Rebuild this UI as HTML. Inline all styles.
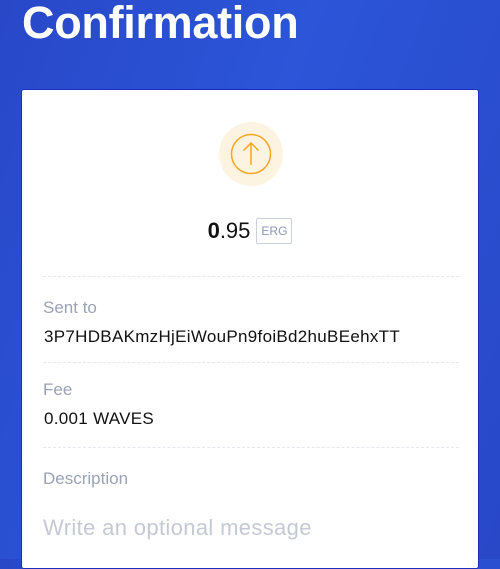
<!DOCTYPE html>
<html><head><style>
*{margin:0;padding:0;box-sizing:border-box}
body{width:500px;height:559px;overflow:hidden;background:linear-gradient(110deg,#2848c8 0%,#2c55d8 45%,#2848c8 100%);font-family:"Liberation Sans",sans-serif;position:relative}
h1{position:absolute;left:22px;top:-3px;font-size:45px;font-weight:bold;color:#fff;letter-spacing:-0.3px}
.card{position:absolute;left:21px;top:89px;width:458px;height:480px;background:#fff;border-radius:3px;border:1px solid #1a2fc0}
.ic{position:absolute;left:197px;top:32px;width:64px;height:64px;border-radius:50%;background:#fcf4e0}
.amt{position:absolute;left:0;width:456px;top:128px;text-align:center;font-size:22px;color:#111}
.tag{display:inline-block;font-size:12px;color:#8c97b8;border:1px solid #c9cfdd;border-radius:2px;padding:5px 4px;vertical-align:3px;margin-left:6px}
.hr{position:absolute;left:21px;width:416px;border-top:1px dashed #e4e7ee}
.l{position:absolute;left:21px;font-size:17px;color:#9aa2b4}
.v{position:absolute;left:22px;font-size:17px;color:#111;letter-spacing:0.3px}
</style></head><body>
<h1>Confirmation</h1>
<div class="card">
<div class="ic"><svg width="64" height="64" viewBox="0 0 64 64"><circle cx="32" cy="32" r="19.5" fill="none" stroke="#f5a623" stroke-width="1.5"/><path d="M32 43V21M24.5 28.5L32 21l7.5 7.5" fill="none" stroke="#f5a623" stroke-width="1.5"/></svg></div>
<div class="amt"><b style="font-weight:600">0</b>.95<span class="tag">ERG</span></div>
<div class="hr" style="top:186px"></div>
<div class="l" style="top:208px">Sent to</div>
<div class="v" style="top:237px">3P7HDBAKmzHjEiWouPn9foiBd2huBEehxTT</div>
<div class="hr" style="top:272px"></div>
<div class="l" style="top:290px">Fee</div>
<div class="v" style="top:319px">0.001 WAVES</div>
<div class="hr" style="top:357px"></div>
<div class="l" style="top:379px">Description</div>
<div class="l" style="top:425px;font-size:22px;color:#c5c9d3;letter-spacing:0.35px">Write an optional message</div>
</div>
</body></html>
